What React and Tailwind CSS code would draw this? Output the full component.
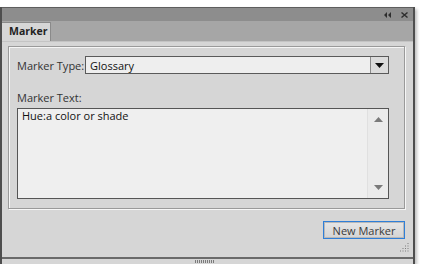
const font = { fontFamily: '"Open Sans", "Noto Sans", sans-serif' }

const Arrow = ({ up, color = '#7a7a7a' }) => (
  <svg width="9" height="5" viewBox="0 0 9 5">
    <path d={up ? 'M4.5 0 L9 5 L0 5 Z' : 'M0 0 L9 0 L4.5 5 Z'} fill={color} />
  </svg>
)

const ResizeGrip = () => {
  const dots = []
  for (let r = 0; r < 4; r++) {
    for (let c = 3 - r; c < 4; c++) {
      dots.push(<rect key={r + '-' + c} x={c * 2.5} y={r * 2.5} width="1" height="1" fill="#7d7d7d" />)
    }
  }
  return (
    <svg width="10" height="10" viewBox="0 0 10 10">
      {dots}
    </svg>
  )
}

export default function App() {
  return (
    <div className="w-[425px] h-[264px] bg-white overflow-hidden" style={font}>
      <div className="mt-[7px] w-[415px] h-[257px] flex flex-col border-x-2 border-[#4e4e4e] shadow-[2px_2px_3px_rgba(0,0,0,0.25)]">
        {/* title bar */}
        <div className="h-[14px] bg-[#8d8d8d] border-t border-[#5e5e5e] flex items-center justify-end gap-[10px] pr-[5px]">
          <svg width="7" height="6" viewBox="0 0 7 6">
            <path d="M3 0 L0 3 L3 6 Z M7 0 L4 3 L7 6 Z" fill="#2e2e2e" />
          </svg>
          <svg width="7" height="6" viewBox="0 0 7 6">
            <path d="M0.5 0.5 L6.5 5.5 M6.5 0.5 L0.5 5.5" stroke="#2e2e2e" strokeWidth="1.4" />
          </svg>
        </div>

        {/* tab strip */}
        <div className="h-[21px] bg-[#a6a6a6] flex items-end border-b border-[#c4c4c4]">
          <div className="h-[19px] w-[49px] bg-[#d6d6d6] border-r border-t border-[#8a8a8a] flex items-center pl-[7px] text-[10.5px] font-bold text-[#222]">
            Marker
          </div>
        </div>

        {/* panel */}
        <div className="flex-1 bg-[#d6d6d6] flex flex-col">
          <div className="mt-[4px] ml-[6px] mr-[8px] h-[163px] border border-[#9a9a9a] shadow-[1px_1px_0_#f6f6f6,inset_1px_1px_0_#f6f6f6] px-[8px] pt-[9px]">
            <div className="flex items-center h-[18px]">
              <span className="text-[11px] text-[#333] w-[68px] whitespace-nowrap leading-none">Marker Type:</span>
              <div className="flex-1 h-[18px] border border-[#5a5a5a] bg-[#eeeeee] flex items-stretch mr-[7px]">
                <div className="flex-1 text-[11px] text-[#111] pl-[4px] flex items-center leading-none">Glossary</div>
                <div className="w-[18px] border-l border-[#8a8a8a] bg-[#dcdcdc] flex items-center justify-center">
                  <Arrow color="#111" />
                </div>
              </div>
            </div>
            <div className="mt-[18px] text-[11px] text-[#333] leading-none">Marker Text:</div>
            <div className="mt-[5px] mr-[7px] h-[91px] border border-[#555] bg-[#efefef] flex">
              <div className="flex-1 text-[11px] text-[#111] pl-[4px] leading-[14px]">Hue:a color or shade</div>
              <div className="w-[21px] bg-[#ebebeb] border-l border-[#e0e0e0] flex flex-col items-center justify-between py-[8px]">
                <Arrow up />
                <Arrow />
              </div>
            </div>
          </div>

          <div className="mt-[12px] flex justify-end pr-[8px]">
            <div className="w-[82px] h-[18px] border border-[#2f7fd8] bg-gradient-to-b from-[#e6e6e6] to-[#d4d4d4] shadow-[inset_0_0_0_1px_#b8b8b8] flex items-center justify-center text-[11px] text-[#3a3a3a] leading-none">
              New Marker
            </div>
          </div>
          <div className="mt-[4px] flex justify-end pr-[3px]">
            <ResizeGrip />
          </div>
        </div>

        {/* bottom strip */}
        <div className="h-[7px] bg-[#d6d6d6] border-t-2 border-[#6a6a6a] flex justify-center items-center">
          <div className="flex gap-[1px] -ml-[6px]">
            {Array.from({ length: 10 }).map((_, i) => (
              <div key={i} className="w-[1px] h-[3px] bg-[#7a7a7a]" />
            ))}
          </div>
        </div>
      </div>
    </div>
  )
}
